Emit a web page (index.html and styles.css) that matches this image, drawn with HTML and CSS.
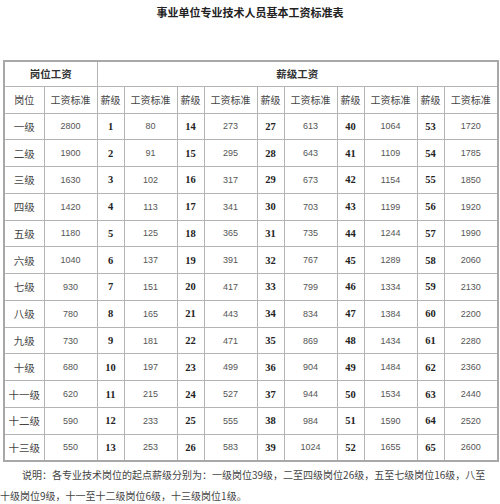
FILE: index.html
```html
<!DOCTYPE html>
<html lang="zh">
<head>
<meta charset="utf-8">
<link rel="stylesheet" href="styles.css">
</head>
<body>
<div class="page">
  <h1 class="title">事业单位专业技术人员基本工资标准表</h1>
  <table class="wage">
    <colgroup>
      <col class="c1"><col class="c2">
      <col class="c3"><col class="c4">
      <col class="c3"><col class="c4">
      <col class="c3"><col class="c4">
      <col class="c3"><col class="c4">
      <col class="c3"><col class="c5">
    </colgroup>
    <thead>
      <tr class="h1">
        <th colspan="2">岗位工资</th>
        <th colspan="10">薪级工资</th>
      </tr>
      <tr class="h2">
        <td>岗位</td><td>工资标准</td>
        <td>薪级</td><td>工资标准</td>
        <td>薪级</td><td>工资标准</td>
        <td>薪级</td><td>工资标准</td>
        <td>薪级</td><td>工资标准</td>
        <td>薪级</td><td>工资标准</td>
      </tr>
    </thead>
    <tbody id="rows"></tbody>
  </table>
  <p class="note">说明：各专业技术岗位的起点薪级分别为：一级岗位39级，二至四级岗位26级，五至七级岗位16级，八至<br>十级岗位9级，十一至十二级岗位6级，十三级岗位1级。</p>
</div>
<script src="script.js"></script>
</body>
</html>
```

FILE: script.js
```js
var posts = ["一级","二级","三级","四级","五级","六级","七级","八级","九级","十级","十一级","十二级","十三级"];
var postPay = [2800,1900,1630,1420,1180,1040,930,780,730,680,620,590,550];
var pay = [80,91,102,113,125,137,151,165,181,197,215,233,253,
  273,295,317,341,365,391,417,443,471,499,527,555,583,
  613,643,673,703,735,767,799,834,869,904,944,984,1024,
  1064,1109,1154,1199,1244,1289,1334,1384,1434,1484,1534,1590,1655,
  1720,1785,1850,1920,1990,2060,2130,2200,2280,2360,2440,2520,2600];
var tb = document.getElementById("rows");
var html = "";
for (var i = 0; i < 13; i++) {
  html += "<tr><td class=\"post\">" + posts[i] + "</td><td class=\"num\">" + postPay[i] + "</td>";
  for (var k = 0; k < 5; k++) {
    var lv = k * 13 + i;
    html += "<td class=\"lvl\">" + (lv + 1) + "</td><td class=\"num\">" + pay[lv] + "</td>";
  }
  html += "</tr>";
}
tb.innerHTML = html;
```

FILE: styles.css
```css
html, body {
  margin: 0;
  padding: 0;
  background: #fff;
}
.page {
  width: 500px;
  font-family: "Noto Sans CJK SC", "Liberation Sans", sans-serif;
  color: #333;
}
.title {
  margin: 0;
  height: 60px;
  padding-top: 4px;
  box-sizing: border-box;
  font-size: 11px;
  line-height: 16px;
  font-weight: bold;
  text-align: center;
  color: #222;
}
.wage {
  margin-left: 3px;
  width: 494px;
  border-collapse: collapse;
  table-layout: fixed;
  border: 2px solid #a8a8a8;
}
.c1 { width: 40px; }
.c2 { width: 53px; }
.c3 { width: 27px; }
.c4 { width: 53px; }
.c5 { width: 54px; }
.wage th, .wage td {
  border: 1px solid #b4b4b4;
  padding: 0;
  text-align: center;
  vertical-align: middle;
  white-space: nowrap;
  overflow: hidden;
}
.wage th {
  font-size: 10.5px;
  font-weight: bold;
  color: #333;
}
.h1 { height: 25px; }
.h2 { height: 27px; }
.h2 td {
  font-size: 10px;
  color: #444;
}
.wage tbody tr { height: 26.77px; }
.post {
  font-size: 10.5px;
  color: #444;
}
.num {
  font-family: "Liberation Sans", sans-serif;
  font-size: 9px;
  color: #555;
}
.lvl {
  font-family: "Liberation Serif", serif;
  font-size: 10.5px;
  font-weight: bold;
  color: #222;
}
.note {
  margin: 2px 0 0 0;
  font-size: 10px;
  line-height: 21px;
  text-indent: 22px;
  color: #444;
  white-space: nowrap;
}
```
